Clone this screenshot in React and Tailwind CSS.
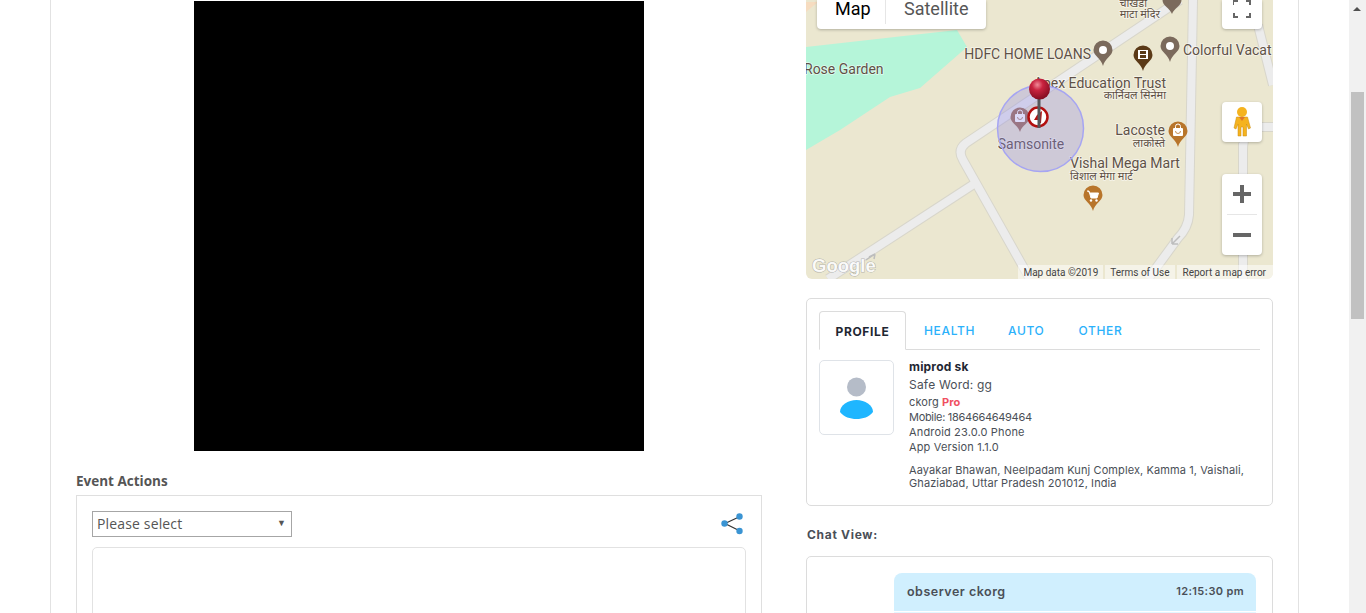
import React from 'react';

// Map pin with a small white glyph inside
const Pin = ({ x, y, tip, color, children }) => (
  <g>
    <path d={`M${x - 9.5} ${y}A9.5 9.5 0 1 1 ${x + 9.5} ${y}C${x + 9.5} ${y + 6} ${x + 2} ${y + 8} ${x} ${tip}C${x - 2} ${y + 8} ${x - 9.5} ${y + 6} ${x - 9.5} ${y}Z`} fill={color} />
    {children}
  </g>
);

const Bag = ({ x, y, color }) => (
  <g>
    <rect x={x - 5} y={y - 3} width="10" height="8" rx="1" fill="#fff" />
    <path d={`M${x - 2.5} ${y - 3} v-1.5 a2.5 2.5 0 0 1 5 0 v1.5`} fill="none" stroke="#fff" strokeWidth="1" />
    <path d={`M${x - 2.5} ${y} a2.5 2.5 0 0 0 5 0`} fill="none" stroke={color} strokeWidth="0.8" />
  </g>
);

const Label = ({ x, y, size = 14, fill = '#5f5146', anchor = 'start', children }) => (
  <text x={x} y={y} fontSize={size} fill={fill} textAnchor={anchor} stroke="#fff" strokeOpacity="0.6" strokeWidth="1.5" paintOrder="stroke" fontFamily="Roboto, 'Noto Sans', sans-serif">
    {children}
  </text>
);

const road = [
  'M1180 0 L966 143 Q957 150 963 160 L1030 279',
  'M974 184 L828 279',
  'M1193 0 L1189 215 Q1188 228 1178 238 L1148 279',
  'M1243 143 L1243 279',
  'M1243 150 Q1243 127 1262 127 L1273 127',
  'M1258 25 L1273 85',
];

const MapView = () => (
  <div className="relative h-[279px] w-[467px] overflow-hidden rounded-b-md bg-[#ebe7d0]">
    <svg className="block" width="467" height="279" viewBox="806 0 467 279">
      <defs>
        <radialGradient id="ball" cx="0.4" cy="0.3" r="0.75">
          <stop offset="0" stopColor="#f08a98" />
          <stop offset="0.35" stopColor="#c9233f" />
          <stop offset="1" stopColor="#7c0a1e" />
        </radialGradient>
      </defs>
      <path d="M806 12 L818 2 L806 2Z" fill="#f6dcc0" />
      <path d="M806 47 L957 30 L967 47 L920 88 L890 97 L840 130 L806 150Z" fill="#b5f5d9" />
      {road.map((d) => <path key={d} d={d} fill="none" stroke="#d8d6cb" strokeWidth="10" />)}
      {road.map((d) => <path key={d + 'i'} d={d} fill="none" stroke="#ececec" strokeWidth="8" />)}
      <path d="M875 254 l-6 3 m6 -3 l-1 5 m1 -5 l-9 6" stroke="#bdbdbd" strokeWidth="1.5" fill="none" />
      <path d="M1180 236 l-8 8 m0 0 v-6 m0 6 h6" stroke="#bdbdbd" strokeWidth="1.5" fill="none" />

      <Label x={1091} y={59} anchor="end">HDFC HOME LOANS</Label>
      <Label x={804} y={74}>Rose Garden</Label>
      <Label x={1183} y={55}>Colorful Vacat</Label>
      <Label x={1166} y={88} anchor="end">Apex Education Trust</Label>
      <Label x={1166} y={99} size={11} anchor="end">कार्निवल सिनेमा</Label>
      <Label x={1165} y={135} anchor="end">Lacoste</Label>
      <Label x={1165} y={147} size={11} anchor="end">लाकोस्ते</Label>
      <Label x={1070} y={168}>Vishal Mega Mart</Label>
      <Label x={1070} y={180} size={11}>विशाल मेगा मार्ट</Label>
      <Label x={1160} y={18} size={11} anchor="end">माटा मंदिर</Label>
      <Label x={1147} y={7} size={11} anchor="end">चाखंडा</Label>

      <Pin x={1103} y={50} tip={66} color="#7b6a5c"><circle cx="1103" cy="50" r="4" fill="#fff" /></Pin>
      <Pin x={1143} y={55} tip={71} color="#5b3a17">
        <rect x="1138" y="50" width="10" height="9" fill="#fff" />
        <rect x="1140" y="51" width="6" height="3" fill="#5b3a17" />
        <rect x="1140" y="55" width="6" height="3" fill="#5b3a17" />
      </Pin>
      <Pin x={1170} y={46} tip={62} color="#7b6a5c"><circle cx="1170" cy="46" r="4" fill="#fff" /></Pin>
      <Pin x={1172} y={0} tip={14} color="#7b6a5c" />
      <Pin x={1020} y={117} tip={132} color="#a1705a"><Bag x={1020} y={117} color="#a1705a" /></Pin>
      <Pin x={1178} y={131} tip={147} color="#b8752b"><Bag x={1178} y={131} color="#b8752b" /></Pin>
      <Pin x={1093} y={195} tip={211} color="#b8752b">
        <path d="M1087 191 h2 l2 7 h6 l1.5 -5 h-9" fill="#fff" stroke="#fff" strokeWidth="1" />
        <circle cx="1091" cy="200.5" r="1.2" fill="#fff" />
        <circle cx="1096.5" cy="200.5" r="1.2" fill="#fff" />
      </Pin>

      <Label x={1031} y={149} anchor="middle">Samsonite</Label>

      <circle cx="1040.5" cy="128.5" r="43" fill="#8a86e8" fillOpacity="0.3" stroke="#a6a5f2" strokeWidth="1.5" />
      <circle cx="1038" cy="117" r="9.5" fill="#fff" stroke="#b30f0f" strokeWidth="2.5" />
      <path d="M1042 111 l-1 12 h-2 l-1 -3 h-4 l3 -5z" fill="#b30f0f" />
      <rect x="1037.5" y="98" width="3" height="30" fill="#55575a" />
      <circle cx="1039.5" cy="89" r="10.5" fill="url(#ball)" />

      <text x="812" y="272" fontSize="18.5" fontWeight="700" fill="#fff" fillOpacity="0.9" stroke="#8a8a8a" strokeOpacity="0.6" strokeWidth="1" paintOrder="stroke" fontFamily="'Liberation Sans', sans-serif">Google</text>
    </svg>

    {/* Map / Satellite switch */}
    <div className="absolute left-[11px] top-0 flex h-[29px] items-end rounded-b-sm bg-white pb-[5px] font-['Roboto'] text-[18px] leading-[30px] shadow-[0_1px_3px_rgba(0,0,0,0.25)]">
      <span className="w-[69px] border-r border-[#e6e6e6] pl-[18px] text-black">Map</span>
      <span className="w-[100px] pl-[18px] text-[#565656]">Satellite</span>
    </div>

    {/* Fullscreen */}
    <div className="absolute left-[416px] top-0 flex h-[29px] w-[40px] items-end justify-center rounded-b-sm bg-white pb-[11px] shadow-[0_1px_3px_rgba(0,0,0,0.25)]">
      <svg width="18" height="18" viewBox="0 0 18 18" fill="none" stroke="#666" strokeWidth="2">
        <path d="M0 5V1h5M13 1h4v4M17 13v4h-4M5 17H1v-4" />
      </svg>
    </div>

    {/* Pegman */}
    <div className="absolute left-[416px] top-[102px] flex h-[40px] w-[40px] items-center justify-center rounded-sm bg-white shadow-[0_1px_3px_rgba(0,0,0,0.25)]">
      <svg width="18" height="30" viewBox="0 0 18 30">
        <circle cx="9" cy="5" r="5" fill="#f5b31f" />
        <path d="M3.5 10h11l3 11-2 1-2-5v12h-3.500v-9h-2v9H5V17l-2 5-2-1z" fill="#f5b31f" stroke="#c98a0e" strokeWidth="0.5" />
        <path d="M6 10l3 4 3-4z" fill="#e0762a" />
      </svg>
    </div>

    {/* Zoom */}
    <div className="absolute left-[416px] top-[174px] flex h-[81px] w-[40px] flex-col items-center rounded-sm bg-white shadow-[0_1px_3px_rgba(0,0,0,0.25)]">
      <div className="flex h-[40px] items-center justify-center">
        <svg width="18" height="18" viewBox="0 0 18 18"><path d="M0 7h7V0h4v7h7v4h-7v7H7v-7H0z" fill="#666" /></svg>
      </div>
      <div className="h-px w-[30px] bg-[#e6e6e6]" />
      <div className="flex h-[40px] items-center justify-center">
        <svg width="18" height="4" viewBox="0 0 18 4"><rect width="18" height="4" fill="#666" /></svg>
      </div>
    </div>

    {/* Attribution */}
    <div className="absolute bottom-0 right-0 flex h-[14px] gap-[2px] font-['Roboto'] text-[10px] leading-[15px] text-[#444]">
      <span className="bg-white/50 px-[5px]">Map data ©2019</span>
      <span className="bg-white/50 px-[5px]">Terms of Use</span>
      <span className="bg-white/50 pl-[6px] pr-[7px]">Report a map error</span>
    </div>
  </div>
);

const ProfileCard = () => (
  <div className="mt-[19px] h-[208px] rounded-[5px] border border-[#dcdcdc] px-[12px] pt-[12px]">
    <div className="flex h-[39px] items-stretch border-b border-[#dcdcdc] text-[12px] font-medium tracking-[0.65px]">
      <div className="-mb-px flex w-[87px] items-center justify-center rounded-t-[4px] border border-[#dcdcdc] border-b-white bg-white pt-[2px] font-bold text-[#1f2733]">PROFILE</div>
      <div className="ml-[18px] flex items-center pt-[2px] text-[#2bb1fb]">HEALTH</div>
      <div className="ml-[33px] flex items-center pt-[2px] text-[#2bb1fb]">AUTO</div>
      <div className="ml-[34px] flex items-center pt-[2px] text-[#2bb1fb]">OTHER</div>
    </div>
    <div className="mt-[10px] flex">
      <div className="flex h-[75px] w-[75px] shrink-0 items-center justify-center rounded-[5px] border border-[#dfe3e8]">
        <svg width="34" height="42" viewBox="841 376 34 42">
          <circle cx="857.5" cy="386" r="9.5" fill="#b5bcc8" />
          <path d="M841 411C841 404 849 399 857.5 399C866 399 874 404 874 411C870 416 864 418 857.5 418C851 418 845 416 841 411Z" fill="#1fb6ff" />
        </svg>
      </div>
      <div className="ml-[15px] min-w-0 text-[#4a4f57]">
        <p className="-mt-px text-[12px] font-bold leading-[15px] tracking-[0.2px] text-[#1f2733]">miprod sk</p>
        <p className="mt-[2px] text-[12px] leading-[18px] tracking-[0.2px]">Safe Word: gg</p>
        <p className="mt-[1px] text-[11px] leading-[15px] tracking-[0.1px]">ckorg <span className="font-bold text-[#f0505f]">Pro</span></p>
        <p className="text-[11px] leading-[15px] tracking-[-0.3px]">Mobile: 1864664649464</p>
        <p className="text-[11px] leading-[15px] tracking-[0.15px]">Android 23.0.0 Phone</p>
        <p className="text-[11px] leading-[15px] tracking-[0.15px]">App Version 1.1.0</p>
        <p className="mt-[9px] w-[345px] text-[11px] leading-[13px] tracking-[0.1px]">Aayakar Bhawan, Neelpadam Kunj Complex, Kamma 1, Vaishali, Ghaziabad, Uttar Pradesh 201012, India</p>
      </div>
    </div>
  </div>
);

const ChatView = () => (
  <div>
    <h3 className="mt-[21px] pl-px text-[12px] font-bold leading-[16px] tracking-[0.7px] text-[#4a4f57]">Chat View:</h3>
    <div className="mt-[13px] h-[80px] rounded-[5px] border border-[#dcdcdc] pl-[87px] pr-[16px] pt-[16px]">
      <div className="flex h-[38px] items-start justify-between rounded-t-[8px] bg-[#d0effe] pl-[13px] pr-[12px] pt-[11px] text-[#4a4f57]">
        <span className="text-[12.5px] font-semibold leading-[16px] tracking-[0.5px]">observer ckorg</span>
        <span className="text-[11px] font-semibold leading-[14px] tracking-[0.35px]">12:15:30 pm</span>
      </div>
      <div className="mt-[1px] h-[20px] bg-[#e3f6ff]" />
    </div>
  </div>
);

export default function App() {
  return (
    <div className="flex h-[613px] overflow-hidden bg-white font-['Inter',sans-serif]">
      <div className="min-w-0 flex-1 pl-[50px] pr-[50px]">
        <div className="flex h-[700px] gap-[44px] border-x border-[#e2e2e2] pl-[25px] pr-[25px]">
          {/* Left column */}
          <div className="w-[686px] shrink-0">
            <div className="mx-auto mt-px h-[450px] w-[450px] bg-black" />
            <h3 className="mt-[22px] font-['Open_Sans',sans-serif] text-[13.5px] font-bold leading-[17px] text-[#555]">Event Actions</h3>
            <div className="mt-[5px] h-[200px] border border-[#dfdfdf] px-[15px] pt-[15px]">
              <div className="flex items-center justify-between">
                <div className="flex h-[26px] w-[200px] items-center justify-between border border-[#a6a6a6] pl-[4px] pr-[5px] font-['Open_Sans',sans-serif] text-[14px] text-[#555]">
                  <span className="mb-px tracking-[0.15px]">Please select</span>
                  <span className="mb-[3px] text-[9px] leading-none text-[#555]">▼</span>
                </div>
                <svg className="mr-[3px]" width="22" height="22" viewBox="0 0 22 22">
                  <path d="M19 3.500L4 10.500L19 18" fill="none" stroke="#333" strokeWidth="1.2" />
                  <circle cx="18.5" cy="3.5" r="3.2" fill="#3a94d3" />
                  <circle cx="18.5" cy="18" r="3.2" fill="#3a94d3" />
                  <circle cx="3.5" cy="10.5" r="3.2" fill="#3a94d3" />
                </svg>
              </div>
              <div className="mt-[10px] h-[150px] rounded-[5px] border border-[#e2e2e2]" />
            </div>
          </div>

          {/* Right column */}
          <div className="w-[467px] shrink-0">
            <MapView />
            <ProfileCard />
            <ChatView />
          </div>
        </div>
      </div>

      {/* Scrollbar */}
      <div className="relative w-[17px] shrink-0 bg-[#f1f1f1] px-[2px]">
        <div className="absolute left-[4px] top-[7px] h-0 w-0 border-x-[4px] border-b-[4px] border-x-transparent border-b-[#505050]" />
        <div className="mt-[92px] h-[227px] bg-[#c1c1c1]" />
      </div>
    </div>
  );
}
